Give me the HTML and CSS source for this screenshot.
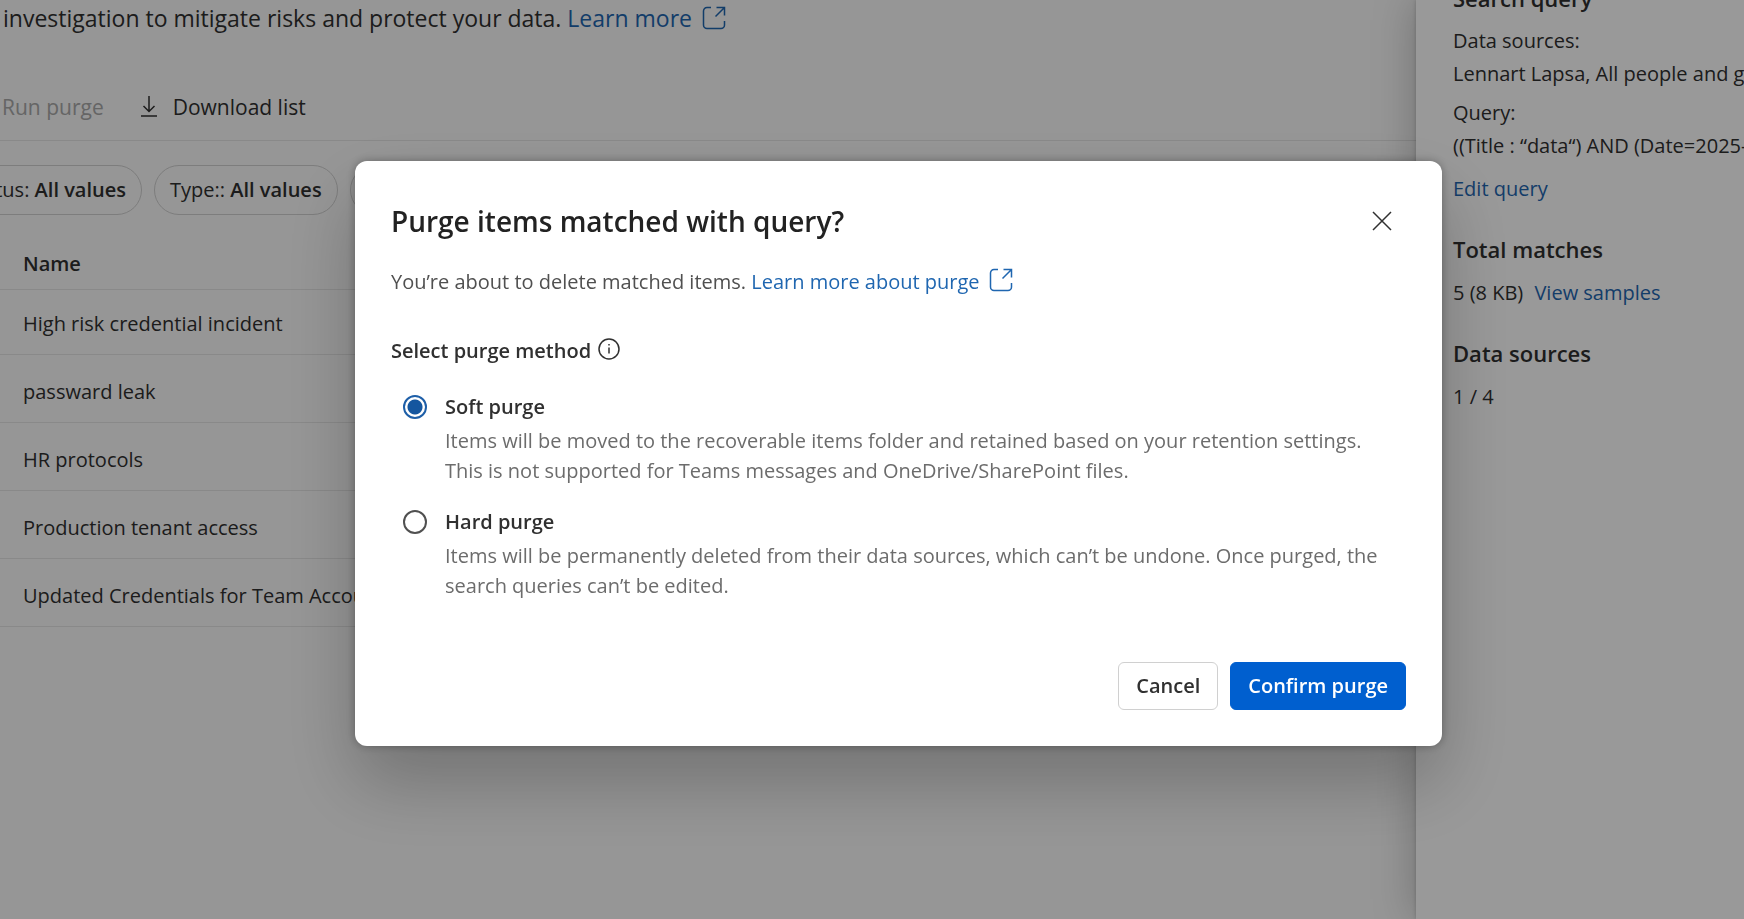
FILE: index.html
```html
<!DOCTYPE html>
<html lang="en">
<head>
    <meta charset="UTF-8">
    <meta name="viewport" content="width=device-width, initial-scale=1.0">
    <title>Purge items</title>
    <link rel="stylesheet" href="styles.css">
</head>
<body>
    <div class="page">
        <main class="content">
            <p class="intro">investigation to mitigate risks and protect your data.
                <a href="#">Learn more
                    <svg class="icon-open" viewBox="0 0 24 24"><path d="M9 1.5H5A3.5 3.5 0 0 0 1.5 5v14A3.5 3.5 0 0 0 5 22.5h14a3.5 3.5 0 0 0 3.5-3.5v-4M14.5 1.5h8v8M22.5 1.5L13.5 10.5"/></svg></a>
            </p>

            <div class="toolbar">
                <button type="button" class="tool" disabled>Run purge</button>
                <button type="button" class="tool">
                    <svg class="icon-download" viewBox="0 0 16 22"><path d="M8 0v15M2.5 10L8 15.5 13.5 10M0 20h16"/></svg>
                    Download list
                </button>
            </div>

            <div class="filters">
                <button type="button" class="pill">Status: <b>All values</b></button>
                <button type="button" class="pill">Type:: <b>All values</b></button>
                <button type="button" class="pill">Date: <b>All values</b></button>
            </div>

            <table>
                <thead>
                    <tr><th>Name</th></tr>
                </thead>
                <tbody>
                    <tr><td>High risk credential incident</td></tr>
                    <tr><td>passward leak</td></tr>
                    <tr><td>HR protocols</td></tr>
                    <tr><td>Production tenant access</td></tr>
                    <tr><td>Updated Credentials for Team Account</td></tr>
                </tbody>
            </table>
        </main>

        <aside class="panel">
            <h3>Search query</h3>
            <dl>
                <dt>Data sources:</dt>
                <dd>Lennart Lapsa, All people and groups</dd>
                <dt>Query:</dt>
                <dd>((Title : “data“) AND (Date=2025-01-01))</dd>
            </dl>
            <a class="edit-link" href="#">Edit query</a>
            <h3>Total matches</h3>
            <p>5 (8 KB) <a class="samples-link" href="#">View samples</a></p>
            <h3>Data sources</h3>
            <p>1 / 4</p>
        </aside>
    </div>

    <div class="overlay">
        <form class="modal" role="dialog" aria-labelledby="modalTitle">
            <div class="modal-header">
                <h2 id="modalTitle">Purge items matched with query?</h2>
                <button type="button" class="close-btn" aria-label="Close">
                    <svg viewBox="0 0 20 20"><path d="M1 1l18 18M19 1L1 19"/></svg>
                </button>
            </div>
            <p class="modal-text">You’re about to delete matched items.
                <a href="#">Learn more about purge
                    <svg class="icon-open" viewBox="0 0 24 24"><path d="M9 1.5H5A3.5 3.5 0 0 0 1.5 5v14A3.5 3.5 0 0 0 5 22.5h14a3.5 3.5 0 0 0 3.5-3.5v-4M14.5 1.5h8v8M22.5 1.5L13.5 10.5"/></svg></a>
            </p>

            <fieldset>
                <legend>Select purge method
                    <svg class="icon-info" viewBox="0 0 22 22"><circle cx="11" cy="11" r="10"/><path d="M11 9.5v6M11 6v1.6"/></svg>
                </legend>
                <div class="option">
                    <input type="radio" id="soft" name="method" checked>
                    <label for="soft">Soft purge</label>
                    <p>Items will be moved to the recoverable items folder and retained based on your retention settings. This is not supported for Teams messages and OneDrive/SharePoint files.</p>
                </div>
                <div class="option">
                    <input type="radio" id="hard" name="method">
                    <label for="hard">Hard purge</label>
                    <p>Items will be permanently deleted from their data sources, which can’t be undone. Once purged, the search queries can’t be edited.</p>
                </div>
            </fieldset>

            <div class="modal-footer">
                <button type="button" class="btn">Cancel</button>
                <button type="submit" class="btn btn-primary">Confirm purge</button>
            </div>
        </form>
    </div>
</body>
</html>
```

FILE: styles.css
```css
* {
    box-sizing: border-box;
}

body {
    margin: 0;
    font-family: "Open Sans", "Noto Sans", sans-serif;
    font-size: 20px;
    line-height: 30px;
    color: #303030;
    background-color: #fafafa;
    overflow: hidden;
}

h2, h3, p, dl, dd {
    margin: 0;
}

a {
    color: #1f66b0;
    text-decoration: none;
}

button {
    font: inherit;
    color: inherit;
    cursor: pointer;
}

svg {
    fill: none;
    stroke: currentColor;
    stroke-width: 1.5;
}

.icon-open {
    width: 24px;
    height: 24px;
    margin-left: 4px;
    vertical-align: -3px;
}

/* page behind the dialog */
.page {
    display: flex;
    height: 100vh;
}

.content {
    flex: 1;
    min-width: 0;
    overflow: hidden;
}

.intro {
    height: 36px;
    padding: 3px;
    font-size: 23px;
}

.toolbar {
    display: flex;
    gap: 33px;
    margin-top: 36px;
    padding: 20px 0 18px;
    border-bottom: 1px solid #e4e4e4;
}

.tool {
    display: flex;
    align-items: center;
    gap: 16px;
    padding: 0 2px;
    border: none;
    background: none;
    font-size: 21px;
    font-weight: 500;
}

.tool:disabled {
    color: #a8a8a8;
    font-weight: 400;
}

.icon-download {
    width: 16px;
    height: 22px;
}

.filters {
    display: flex;
    gap: 12px;
    margin: 24px 0 0 -50px;
}

.pill {
    padding: 9px 15px;
    border: 1px solid #d0d0d0;
    border-radius: 25px;
    background: none;
    white-space: nowrap;
}

.pill b {
    font-weight: 600;
}

table {
    width: 100%;
    margin-top: 24px;
    border-collapse: collapse;
}

th, td {
    padding: 0 23px;
    border-bottom: 1px solid #e4e4e4;
    text-align: left;
}

th {
    height: 50px;
    font-weight: 600;
}

td {
    height: 68px;
    padding-top: 8px;
}

tbody tr:first-child td {
    height: 65px;
    padding-top: 4px;
}

.panel {
    width: 328px;
    padding-left: 37px;
    background-color: #fff;
    box-shadow: 0 0 40px rgba(0, 0, 0, 0.25), 0 0 4px rgba(0, 0, 0, 0.2);
    white-space: nowrap;
    overflow: hidden;
}

.panel h3 {
    margin: 30px 0 14px;
    font-size: 22px;
    font-weight: 600;
}

.panel h3:first-child {
    margin: -17px 0 13px;
}

.panel dd {
    margin: 3px 0 9px;
}

.edit-link {
    display: block;
    margin-top: 13px;
}

.samples-link {
    margin-left: 6px;
}

/* dialog */
.overlay {
    position: fixed;
    inset: 0;
    display: flex;
    align-items: flex-start;
    padding: 161px 302px 0 355px;
    background-color: rgba(0, 0, 0, 0.4);
}

.modal {
    flex: 1;
    padding: 36px;
    border-radius: 12px;
    background-color: #fff;
    box-shadow: 0 36px 72px rgba(0, 0, 0, 0.24), 0 0 10px rgba(0, 0, 0, 0.3);
}

.modal-header {
    display: flex;
    justify-content: space-between;
    align-items: center;
    height: 48px;
}

.modal h2 {
    font-size: 28px;
    font-weight: 600;
    color: #222;
}

.close-btn {
    display: flex;
    padding: 14px;
    border: none;
    background: none;
}

.close-btn svg {
    width: 20px;
    height: 20px;
}

.modal-text {
    height: 30px;
    margin-top: 22px;
    color: #505050;
}

fieldset {
    margin: 39px 0 0;
    padding: 0;
    border: none;
}

legend {
    padding: 0;
    font-weight: 600;
}

.icon-info {
    width: 22px;
    height: 22px;
    margin-left: 2px;
    vertical-align: -2px;
}

.option {
    display: grid;
    grid-template-columns: 24px 1fr;
    column-gap: 18px;
    align-items: center;
    margin: 21px 0 0 12px;
}

legend + .option {
    margin-top: 26px;
}

.option label {
    font-weight: 600;
}

.option p {
    grid-column: 2;
    margin-top: 4px;
    padding-right: 18px;
    color: #6c6c6c;
}

.option input {
    appearance: none;
    width: 24px;
    height: 24px;
    margin: 0;
    border: 2px solid #505050;
    border-radius: 50%;
}

.option input:checked {
    border-color: #1e5fa8;
    background: radial-gradient(circle, #14569f 7px, #fff 8px);
}

.modal-footer {
    display: flex;
    justify-content: flex-end;
    gap: 12px;
    margin-top: 61px;
}

.btn {
    height: 48px;
    padding: 0 17px;
    border: 1px solid #d0d0d0;
    border-radius: 6px;
    background-color: #fff;
    font-weight: 600;
}

.btn-primary {
    border-color: #005fcf;
    background-color: #005fcf;
    color: #fff;
}
```
